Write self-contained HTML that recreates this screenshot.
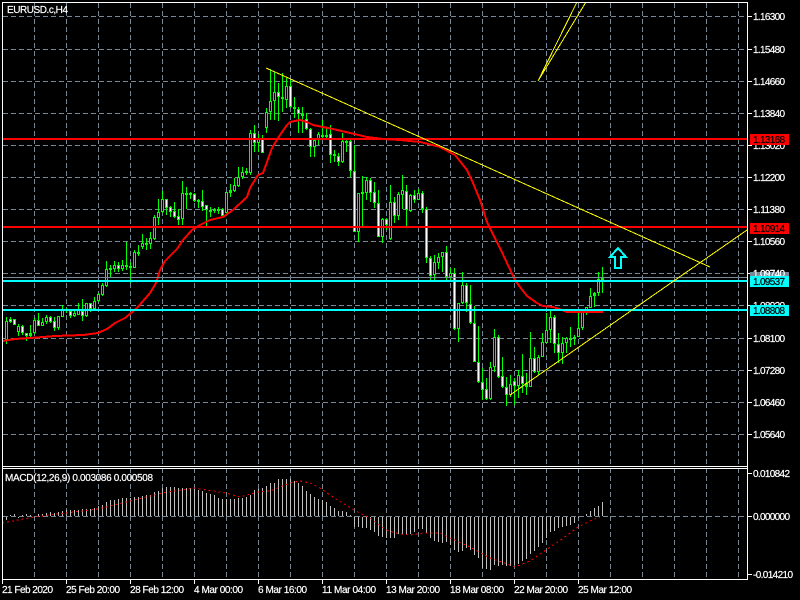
<!DOCTYPE html>
<html><head><meta charset="utf-8"><title>EURUSD.c,H4</title>
<style>html,body{margin:0;padding:0;background:#000;width:800px;height:600px;overflow:hidden}svg{display:block}text{font-family:"Liberation Sans",sans-serif;font-size:10px;fill:#fff;stroke:#fff;stroke-width:.2px}text.k{fill:#000;stroke:#000}</style></head>
<body>
<svg width="800" height="600" viewBox="0 0 800 600" xmlns="http://www.w3.org/2000/svg" shape-rendering="crispEdges">
<rect width="800" height="600" fill="#000"/>
<g transform="translate(0,.5)" stroke="#778899" fill="none" stroke-dasharray="5 3">
<path d="M3 16H747M3 49H747M3 81H747M3 113H747M3 145H747M3 177H747M3 209H747M3 241H747M3 273H747M3 305H747M3 338H747M3 370H747M3 402H747M3 434H747M3 516H747"/>
</g>
<g transform="translate(.5,0)" stroke="#778899" fill="none" stroke-dasharray="5 3">
<path d="M34 3V466M66 3V466M98 3V466M130 3V466M162 3V466M194 3V466M226 3V466M258 3V466M290 3V466M322 3V466M354 3V466M386 3V466M418 3V466M450 3V466M482 3V466M514 3V466M546 3V466M578 3V466M610 3V466M642 3V466M674 3V466M706 3V466M738 3V466"/>
<path d="M34 468V579M66 468V579M98 468V579M130 468V579M162 468V579M194 468V579M226 468V579M258 468V579M290 468V579M322 468V579M354 468V579M386 468V579M418 468V579M450 468V579M482 468V579M514 468V579M546 468V579M578 468V579M610 468V579M642 468V579M674 468V579M706 468V579M738 468V579"/>
</g>
<g transform="translate(.5,0)" fill="none">
<path stroke="#00ff00" d="M6 317V344M10 317V323M14 319V325M18 324V336M22 325V335M26 333V341M30 325V337M34 318V334M38 313V326M42 318V326M46 315V324M50 316V323M54 317V331M58 316V330M62 305V317M66 308V313M70 310V318M74 309V317M78 303V315M82 299V321M86 303V317M90 303V312M94 297V310M98 293V302M102 283V296M106 261V287M110 265V278M114 261V272M118 262V272M122 260V271M126 242V270M130 262V283M134 250V268M138 245V256M142 234V249M146 238V250M150 232V249M154 215V240M158 199V225M162 191V213M166 199V215M170 206V217M174 202V218M178 209V225M182 181V225M186 187V209M190 192V199M194 193V202M198 199V208M202 190V211M206 205V226M210 207V217M214 208V213M218 207V214M222 208V217M226 192V215M230 184V197M234 178V192M238 167V187M242 167V179M246 168V175M250 130V175M254 125V152M258 134V152M262 135V153M266 108V133M270 69V120M274 72V120M278 83V121M282 73V112M286 78V108M290 80V108M294 97V118M298 107V133M302 107V133M306 113V130M310 128V157M314 138V157M318 132V145M322 120V138M326 128V140M330 125V163M334 150V162M338 153V166M342 133V163M346 140V152M350 140V177M354 145V232M358 193V242M362 176V227M366 177V200M370 178V202M374 182V208M378 190V237M382 218V243M386 218V230M390 185V240M394 197V223M398 192V220M402 175V209M406 185V226M410 194V212M414 190V203M418 189V200M422 191V213M426 207V263M430 256V280M434 255V280M438 253V269M442 252V272M446 246V280M450 268V280M454 268V330M458 303V342M462 272V304M466 283V312M470 285V324M474 306V362M478 326V383M482 368V400M486 378V400M490 362V400M494 329V372M498 335V378M502 357V388M506 377V406M510 375V397M514 378V405M518 370V398M522 354V393M526 373V395M530 332V387M534 347V373M538 355V375M542 333V357M546 313V343M550 310V343M554 315V353M558 333V363M562 337V364M566 337V353M570 327V347M574 335V345M578 312V337M582 312V330M586 307V315M590 288V308M594 292V307M598 272V296M602 267V293"/>
<path stroke="#00ff00" stroke-width="3" d="M6 321V340M10 319V322M14 319V325M18 326V332M22 326V333M26 333V336M30 333V336M34 320V333M38 320V326M42 322V326M46 317V322M50 317V322M54 321V328M58 316V328M62 309V317M66 309V311M70 311V316M74 313V316M78 309V315M82 311V316M86 303V316M90 303V309M94 301V309M98 294V301M102 285V295M106 269V286M110 268V270M114 265V269M118 265V269M122 265V269M126 265V267M130 266V268M134 252V268M138 252V254M142 243V247M146 243V245M150 238V244M154 217V239M158 212V218M162 199V212M166 199V208M170 207V212M174 211V217M178 216V220M182 193V219M186 193V195M190 193V195M194 194V201M198 200V202M202 201V207M206 205V210M210 210V212M214 209V211M218 209V211M222 209V216M226 192V213M230 190V193M234 185V191M238 177V186M242 172V177M246 171V173M250 133V173M254 133V143M258 139V143M262 139V153M266 112V128M270 101V112M274 92V101M278 92V97M282 97V99M286 86V100M290 86V107M294 107V109M298 109V114M302 114V116M306 119V129M310 129V147M314 140V147M318 134V140M322 135V137M326 135V137M330 134V155M334 154V156M338 156V162M342 141V162M346 141V143M350 141V171M354 171V232M358 193V232M362 192V194M366 180V193M370 180V193M374 192V203M378 203V237M382 219V237M386 219V225M390 202V239M394 202V216M398 194V216M402 190V195M406 191V210M410 195V211M414 195V200M418 193V200M422 193V209M426 209V258M430 258V276M434 262V275M438 257V263M442 252V257M446 252V277M450 273V277M454 273V329M458 303V329M462 285V303M466 285V303M470 304V323M474 323V362M478 362V382M482 382V390M486 389V399M490 367V399M494 337V367M498 337V377M502 376V387M506 387V395M510 384V395M514 381V386M518 375V386M522 376V384M526 383V387M530 358V387M534 358V372M538 357V372M542 342V357M546 330V343M550 317V330M554 317V344M558 344V353M562 343V353M566 338V343M570 338V340M574 337V339M578 328V337M582 312V328M586 307V312M590 296V308M594 293V296M598 279V293M602 278V280"/>
<path stroke="#fff" d="M10 320V321M14 320V324M22 327V332M26 334V335M38 321V325M50 318V321M54 322V327M70 312V315M82 312V315M90 304V308M118 266V268M166 200V207M170 208V211M174 212V216M178 217V219M194 195V200M202 202V206M206 206V209M222 210V215M254 134V142M262 140V152M278 93V96M282 98V98M290 87V106M298 110V113M306 120V128M310 130V146M330 135V154M338 157V161M350 142V170M354 172V231M370 181V192M374 193V202M378 204V236M386 220V224M394 203V215M406 192V209M414 196V199M422 194V208M426 210V257M430 259V275M446 253V276M454 274V328M466 286V302M470 305V322M474 324V361M478 363V381M482 383V389M486 390V398M498 338V376M502 377V386M506 388V394M514 382V385M522 377V383M534 359V371M554 318V343M558 345V352"/>
<path stroke="#000" d="M6 322V339M18 327V331M34 321V332M42 323V325M46 318V321M58 317V327M62 310V316M74 314V315M78 310V314M86 304V315M94 302V308M98 295V300M102 286V294M106 270V285M114 266V268M122 266V268M134 253V267M142 244V246M150 239V243M154 218V238M158 213V217M162 200V211M182 194V218M226 193V212M234 186V190M238 178V185M242 173V176M250 134V172M258 140V142M266 113V127M270 102V111M274 93V100M286 87V99M314 141V146M318 135V139M342 142V161M358 194V231M366 181V192M382 220V236M390 203V238M398 195V215M402 191V194M410 196V210M418 194V199M434 263V274M438 258V262M442 253V256M450 274V276M458 304V328M462 286V302M490 368V398M494 338V366M510 385V394M518 376V385M530 359V386M538 358V371M542 343V356M546 331V342M550 318V329M562 344V352M566 339V342M578 329V336M582 313V327M586 308V311M590 297V307M598 280V292"/>
<path stroke="#c0c0c0" d="M6 517V520M10 516V515M14 516V514M18 517V518M22 516V515M26 516V514M30 516V515M38 516V514M42 516V514M46 516V513M50 516V512M54 516V513M58 516V512M62 516V511M66 516V510M70 516V510M74 516V510M78 516V510M82 516V509M86 516V509M90 516V509M94 516V508M98 516V506M102 516V505M106 516V502M110 516V500M114 516V500M118 516V499M122 516V498M126 516V498M130 516V498M134 516V497M138 516V497M142 516V496M146 516V495M150 516V495M154 516V492M158 516V491M162 516V488M166 516V487M170 516V487M174 516V487M178 516V488M182 516V488M186 516V488M190 516V488M194 516V489M198 516V490M202 516V491M206 516V493M210 516V494M214 516V495M218 516V498M222 516V499M226 516V499M230 516V499M234 516V499M238 516V498M242 516V498M246 516V497M250 516V495M254 516V490M258 516V489M262 516V488M266 516V486M270 516V483M274 516V483M278 516V479M282 516V479M286 516V479M290 516V479M294 516V481M298 516V483M302 516V486M306 516V491M310 516V494M314 516V497M318 516V499M322 516V500M326 516V502M330 516V506M334 516V508M338 516V511M342 516V511M346 516V512M350 516V515M354 517V527M358 517V527M362 517V528M366 517V528M370 517V530M374 517V532M378 517V536M382 517V537M386 517V538M390 517V538M394 517V538M398 517V534M402 517V534M406 517V534M410 517V534M414 517V532M418 517V529M422 517V529M426 517V533M430 517V538M434 517V541M438 517V542M442 517V543M446 517V542M450 517V545M454 517V550M458 517V552M462 517V551M466 517V548M470 517V550M474 517V555M478 517V558M482 517V568M486 517V569M490 517V570M494 517V565M498 517V566M502 517V565M506 517V566M510 517V566M514 517V565M518 517V564M522 517V561M526 517V559M530 517V554M534 517V551M538 517V547M542 517V543M546 517V538M550 517V532M554 517V531M558 517V528M562 517V527M566 517V526M570 517V525M574 517V523M578 517V518M586 516V514M590 516V511M594 516V508M598 516V506M602 516V502"/>
</g>
<path fill="none" stroke="#ff0000" stroke-width="1" stroke-dasharray="2 3" d="M2 523L34 517L98 509L162 493L194 488L226 493L240 497L258 492L270 491L290 483L300 481L310 483L320 488L336 499L354 510L370 518L386 530L400 534L410 535L424 533L440 533L450 538L470 547L490 558L510 565L515 567L530 561L546 550L562 539L578 527L590 521L600 517"/>
<path fill="none" stroke="#ff0000" stroke-width="2" d="M3 341L15 339L30 338L43 337L55 336L83 335L98 333L107 329L115 323L125 318L137 308L150 293L156 283L160 270L165 261L177 249L183 240L192 230L200 225L210 220L223 217L233 210L247 197L250 188L258 175L263 173L272 148L280 135L287 125L290 122L300 120L307 122L313 125L333 129L350 133L367 137L383 139L400 140L420 142L440 147L455 155L467 170L473 183L480 200L487 222L500 248L507 263L515 280L520 287L527 296L537 303L543 306L553 307L562 310L567 312L603 312"/>
<g fill="#778899"><rect x="3" y="277" width="745" height="1"/></g>
<g>
<rect x="3" y="138" width="745" height="2" fill="#ff0000"/>
<rect x="3" y="226" width="745" height="2" fill="#ff0000"/>
<rect x="3" y="280" width="745" height="2" fill="#00ffff"/>
<rect x="3" y="309" width="745" height="2" fill="#00ffff"/>
</g>
<g fill="none" stroke="#ffff00" stroke-width="1">
<path d="M266 68L710 267"/>
<path d="M510 395L747 230"/>
<path d="M538 81L577 2"/>
<path d="M538 81L586 2"/>
</g>
<path d="M618 248L626 257H621V268H615V257H610Z" fill="none" stroke="#00ffff" stroke-width="2"/>
<g fill="#fff">
<rect x="2" y="2" width="746" height="1"/>
<rect x="2" y="2" width="1" height="577"/>
<rect x="747" y="2" width="1" height="577"/>
<rect x="2" y="466" width="746" height="1"/>
<rect x="2" y="468" width="746" height="1"/>
<rect x="2" y="579" width="746" height="1"/>
<path d="M748 16h4v1h-4zM748 49h4v1h-4zM748 81h4v1h-4zM748 113h4v1h-4zM748 145h4v1h-4zM748 177h4v1h-4zM748 209h4v1h-4zM748 241h4v1h-4zM748 273h4v1h-4zM748 305h4v1h-4zM748 338h4v1h-4zM748 370h4v1h-4zM748 402h4v1h-4zM748 434h4v1h-4zM748 473h4v1h-4zM748 516h4v1h-4zM748 574h4v1h-4z"/>
<path d="M2 580h1v4h-1zM66 580h1v4h-1zM130 580h1v4h-1zM194 580h1v4h-1zM258 580h1v4h-1zM322 580h1v4h-1zM386 580h1v4h-1zM450 580h1v4h-1zM514 580h1v4h-1zM578 580h1v4h-1z"/>
</g>
<g shape-rendering="auto">
<text x="7" y="13" textLength="61" lengthAdjust="spacing">EURUSD.c,H4</text>
<text x="5" y="481" textLength="148" lengthAdjust="spacing">MACD(12,26,9) 0.003086 0.000508</text>
<text x="753" y="20" textLength="32">1.16300</text>
<text x="753" y="53" textLength="32">1.15480</text>
<text x="753" y="85" textLength="32">1.14660</text>
<text x="753" y="117" textLength="32">1.13840</text>
<text x="753" y="149" textLength="32">1.13020</text>
<text x="753" y="181" textLength="32">1.12200</text>
<text x="753" y="213" textLength="32">1.11380</text>
<text x="753" y="245" textLength="32">1.10560</text>
<text x="753" y="277" textLength="32">1.09740</text>
<text x="753" y="309" textLength="32">1.08920</text>
<text x="753" y="342" textLength="32">1.08100</text>
<text x="753" y="374" textLength="32">1.07280</text>
<text x="753" y="406" textLength="32">1.06460</text>
<text x="753" y="438" textLength="32">1.05640</text>
<text x="753" y="477" textLength="37">0.010842</text>
<text x="753" y="520" textLength="37">0.000000</text>
<text x="753" y="578" textLength="40">-0.014210</text>
<text x="2" y="593" textLength="51">21 Feb 2020</text>
<text x="66" y="593" textLength="54">25 Feb 20:00</text>
<text x="130" y="593" textLength="54">28 Feb 12:00</text>
<text x="194" y="593" textLength="49">4 Mar 00:00</text>
<text x="258" y="593" textLength="49">6 Mar 16:00</text>
<text x="322" y="593" textLength="54">11 Mar 04:00</text>
<text x="386" y="593" textLength="54">13 Mar 20:00</text>
<text x="450" y="593" textLength="54">18 Mar 08:00</text>
<text x="514" y="593" textLength="54">22 Mar 20:00</text>
<text x="578" y="593" textLength="54">25 Mar 12:00</text>
</g>
<rect x="750" y="134" width="39" height="11" fill="#ff0000"/>
<rect x="750" y="223" width="39" height="11" fill="#ff0000"/>
<rect x="750" y="272" width="39" height="11" fill="#778899"/>
<text x="753" y="277" textLength="32">1.09740</text>
<rect x="750" y="276" width="39" height="11" fill="#00ffff"/>
<rect x="750" y="305" width="39" height="11" fill="#00ffff"/>
<g shape-rendering="auto">
<text class="k" x="753" y="143" textLength="32">1.13168</text>
<text class="k" x="753" y="232" textLength="32">1.10914</text>
<text class="k" x="753" y="285" textLength="32">1.09537</text>
<text class="k" x="753" y="314" textLength="32">1.08808</text>
</g>
</svg>
</body></html>
